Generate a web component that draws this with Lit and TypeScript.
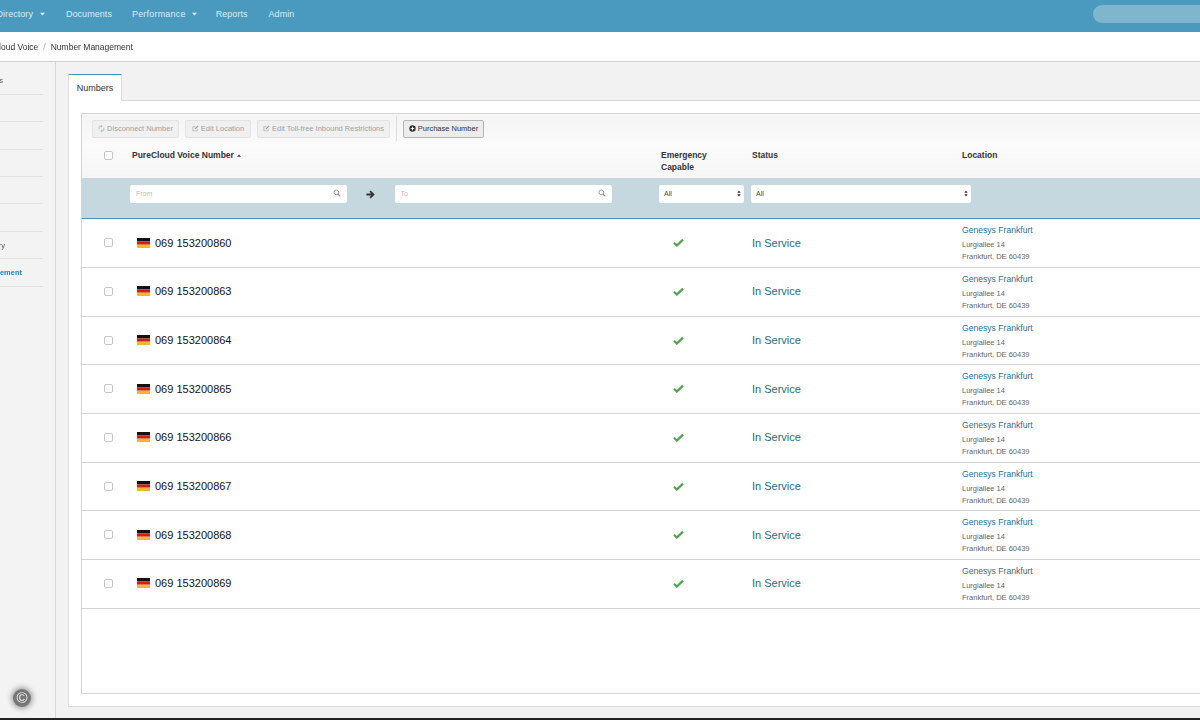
import { LitElement, html, css, svg } from "lit";
import { customElement } from "lit/decorators.js";

const NUMBERS = ["860", "863", "864", "865", "866", "867", "868", "869"];

const caret = html`<svg class="caret" viewBox="0 0 6 4"><path d="M0 .5h6L3 3.8z" fill="currentColor"/></svg>`;
const search = html`<svg class="search" viewBox="0 0 12 12"><circle cx="5" cy="5" r="3.5" fill="none" stroke="currentColor" stroke-width="1.3"/><path d="M7.6 7.6l3.4 3.4" stroke="currentColor" stroke-width="1.6"/></svg>`;
const updown = html`<svg class="updown" viewBox="0 0 6 10"><path d="M3 .5L5.5 4h-5zM3 9.5L.5 6h5z" fill="currentColor"/></svg>`;
const edit = html`<svg class="bi" viewBox="0 0 12 12"><path d="M9 7v3H1.500V3H6" fill="none" stroke="currentColor" stroke-width="1"/><path d="M4.500 7.500l.5-2L9.500 1l1.500 1.500L6.500 7z" fill="currentColor"/></svg>`;
const unlink = html`<svg class="bi" viewBox="0 0 12 12"><path d="M2 7V3.500A1.500 1.500 0 0 1 3.500 2H7M5 4.500L7 2 5 0M10 5v3.500A1.500 1.500 0 0 1 8.500 10H5M7 7.500L5 10l2 2" fill="none" stroke="currentColor" stroke-width="1"/></svg>`;
const plus = html`<svg class="bi" viewBox="0 0 12 12"><circle cx="6" cy="6" r="5.500" fill="#333"/><path d="M6 3v6M3 6h6" stroke="#fff" stroke-width="1.600"/></svg>`;
const flag = svg`<svg class="flag" viewBox="0 0 13 10"><rect width="13" height="3.400" fill="#111"/><rect y="3.400" width="13" height="3.300" fill="#c8201c"/><rect y="6.700" width="13" height="3.300" fill="#f2b632"/></svg>`;
const check = svg`<svg class="check" viewBox="0 0 12 10"><path d="M1 5.200l3.200 3.200L11 1.800" fill="none" stroke="#4ea54e" stroke-width="2.400"/></svg>`;
const arrow = svg`<svg class="arrow" viewBox="0 0 10 10"><path d="M.5 5h7M4.500 1.300L8.300 5 4.500 8.700" fill="none" stroke="#333" stroke-width="2"/></svg>`;

const SIDE = [
  { label: "Sites", cls: "p40" },
  { label: "", cls: "p40" },
  { label: "", cls: "p40" },
  { label: "", cls: "p40" },
  { label: "", cls: "p40" },
  { label: "", cls: "p40" },
  { label: "Inventory", cls: "p38" },
  { label: "Number Management", cls: "p21 active" },
];

@customElement("app-root")
export class AppRoot extends LitElement {
  static styles = css`
    :host { display: block; width: 1200px; height: 720px; overflow: hidden; background: #fff;
      font-family: "Liberation Sans", Arial, sans-serif; color: #333; position: relative; }
    .page { display: flex; flex-direction: column; height: 718px; filter: blur(0.4px); }
    .nav { height: 32px; flex: none; box-sizing: border-box; padding-bottom: 5px; background: #4a9abf; display: flex; align-items: center;
      color: #d5eef7; font-size: 9px; letter-spacing: .05px; overflow: hidden; }
    .nav-items { display: flex; align-items: center; gap: 21px; margin-left: -3.500px; flex: 1; white-space: nowrap; }
    .nav-item { display: flex; align-items: center; gap: 6px; }
    .nav-item.first { gap: 7px; }
    .nav-item.docs { margin-right: -1px; }
    .nav-item.wide { letter-spacing: .2px; margin-right: -2px; }
    .caret { width: 5px; height: 4px; }
    .nav-search { width: 130px; height: 18px; margin-right: -23px; border-radius: 9px;
      background: #7fb6cd; flex: none; }
    .crumbs { height: 30px; box-sizing: border-box; flex: none; display: flex; align-items: center; gap: 4px; margin-left: -25px;
      font-size: 8.500px; color: #333; border-bottom: 1px solid #cfcfcf; white-space: nowrap; padding-top: 1px; }
    .crumbs .sep { color: #aaa; padding: 0 1px; }
    .body { flex: 1; display: flex; min-height: 0; }
    .side { width: 55px; flex: none; background: #f3f3f3; border-right: 1px solid #d8d8d8; overflow: hidden; }
    .side-list { display: flex; flex-direction: column; padding-top: 5.500px; width: 43px; }
    .side-item { height: 27.400px; box-sizing: border-box; border-bottom: 1px solid #e2e2e2; font-size: 7.500px; color: #555;
      display: flex; align-items: center; justify-content: flex-end; white-space: nowrap; overflow: hidden; flex: none; }
    .side-item span { flex: none; }
    .p40 { padding-right: 40px; } .p38 { padding-right: 38px; } .p21 { padding-right: 21px; }
    .side-item.active { color: #1a87b4; font-weight: bold; }
    .main { flex: 1; min-width: 0; background: #f2f2f2; padding: 12px 0 11px 12px; display: flex; flex-direction: column; overflow: hidden; }
    .tabs { height: 27px; flex: none; display: flex; border-bottom: 1px solid #d9d9d9; box-sizing: border-box; }
    .tab { width: 54px; height: 27px; background: #fff; border-top: 1px solid #3f93b8; border-left: 1px solid #dedede; border-right: 1px solid #dedede;
      box-sizing: border-box; font-size: 9px; display: flex; align-items: center; justify-content: center; color: #333; }
    .panel { flex: 1; min-height: 0; width: 1200px; background: #fff; border-left: 1px solid #e0e0e0; border-bottom: 1px solid #dcdcdc;
      padding: 12px 0 12px 12px; box-sizing: border-box; display: flex; }
    .grid { flex: 1; border: 1px solid #d5d5d5; display: flex; flex-direction: column; }
    .toolbar { height: 29px; flex: none; display: flex; align-items: center; padding-left: 10px; gap: 6px;
      background: linear-gradient(#f4f4f4, #fafafa); }
    .btn { height: 18px; box-sizing: border-box; display: flex; align-items: center; justify-content: center; gap: 2px; border: 1px solid #e3e3e3;
      background: #f0f0f0; color: #a0a0a0; font-size: 7.500px; border-radius: 2px; white-space: nowrap; }
    .btn.on { border-color: #b5b5b5; background: #ececec; color: #333; }
    .b1 { width: 87px; } .b2 { width: 66px; } .b3 { width: 133px; } .b4 { width: 81px; }
    .divider { width: 1px; align-self: stretch; background: #dcdcdc; margin: 2px 0; }
    .bi { width: 7px; height: 7px; flex: none; }
    .cols { display: grid; grid-template-columns: 50px 529px 91px 210px 1fr; }
    .head { height: 35px; flex: none; background: linear-gradient(#fbfbfb, #f6f6f6); font-size: 8.500px; font-weight: bold; color: #333; line-height: 11.500px; }
    .head > div { padding-top: 7px; }
    .head > div:first-child { padding-top: 8px; }
    .cb { display: block; width: 7px; height: 7px; border: 1px solid #c6c6c6; border-radius: 2px; background: #fff; margin-left: 22px; }
    .sort-caret { width: 4px; height: 3px; display: inline-block; vertical-align: middle; margin-left: 3px; }
    .filters { height: 41.300px; flex: none; background: #c5d8e0; border-bottom: 1.500px solid #4c94b8; display: flex; align-items: flex-start; padding-top: 7px; box-sizing: border-box; padding-left: 48px; }
    .field { height: 18px; box-sizing: border-box; background: #fff; border-radius: 2px; display: flex; align-items: center; padding: 0 6px 1.500px; font-size: 7px; color: #444; }
    .field input { border: 0; outline: 0; background: none; padding: 0; margin: 0; flex: 1; min-width: 0; font: inherit; color: inherit; }
    .field input::placeholder { color: #bbb; }
    .from { width: 217px; } .to { width: 217px; }
    .search { width: 8px; height: 8px; color: #888; flex: none; }
    .arrow { width: 9px; height: 9px; flex: none; margin: 5px 19.500px 0 19px; }
    .sel { justify-content: space-between; padding: 0 3px 1.500px 5px; }
    .s1 { width: 85px; margin-left: 47.500px; } .s2 { width: 220px; margin-left: 7px; }
    .updown { width: 4px; height: 7px; color: #333; }
    .row { height: 48.700px; box-sizing: border-box; flex: none; border-bottom: 1px solid #d4d4d4; align-items: center; padding-bottom: 1px; }
    .num { display: flex; align-items: center; gap: 5px; font-size: 11px; color: #111; padding-left: 5px; }
    .flag { width: 13px; height: 10px; flex: none; }
    .check { width: 11px; height: 9px; display: block; margin-left: 12px; }
    .status { font-size: 11px; color: #2b6a87; }
    .loc { font-size: 7.500px; line-height: 12px; color: #666; margin-top: 2px; }
    .loc a { display: block; color: #2b6f92; font-size: 8.600px; line-height: 13px; margin-bottom: 2px; text-decoration: none; }
    .badge { position: absolute; left: 13px; top: 689px; width: 18px; height: 18px; border-radius: 50%; background: #777;
      box-shadow: 0 0 5px 2px rgba(0,0,0,.3); color: #f2f2f2; font-size: 15px; line-height: 18px; text-align: center; filter: blur(.3px); }
    .foot { height: 2px; background: #222; }
  `;

  render() {
    return html`
      <div class="page">
        <div class="nav">
          <div class="nav-items">
            <div class="nav-item first">Directory ${caret}</div>
            <div class="nav-item docs">Documents</div>
            <div class="nav-item wide">Performance ${caret}</div>
            <div class="nav-item">Reports</div>
            <div class="nav-item">Admin</div>
          </div>
          <div class="nav-search"></div>
        </div>
        <div class="crumbs"><span>PureCloud Voice</span><span class="sep">/</span><span>Number Management</span></div>
        <div class="body">
          <div class="side">
            <div class="side-list">
              ${SIDE.map(s => html`<div class="side-item ${s.cls}"><span>${s.label}</span></div>`)}
            </div>
          </div>
          <div class="main">
            <div class="tabs"><div class="tab">Numbers</div></div>
            <div class="panel">
              <div class="grid">
                <div class="toolbar">
                  <div class="btn b1">${unlink}Disconnect Number</div>
                  <div class="btn b2">${edit}Edit Location</div>
                  <div class="btn b3">${edit}Edit Toll-free Inbound Restrictions</div>
                  <div class="divider"></div>
                  <div class="btn on b4">${plus}Purchase Number</div>
                </div>
                <div class="head cols">
                  <div><span class="cb"></span></div>
                  <div>PureCloud Voice Number<svg class="sort-caret" viewBox="0 0 6 4"><path d="M0 3.800h6L3 .5z" fill="#333"/></svg></div>
                  <div>Emergency<br />Capable</div>
                  <div>Status</div>
                  <div>Location</div>
                </div>
                <div class="filters">
                  <div class="field from"><input placeholder="From" />${search}</div>
                  ${arrow}
                  <div class="field to"><input placeholder="To" />${search}</div>
                  <div class="field sel s1"><span>All</span>${updown}</div>
                  <div class="field sel s2"><span>All</span>${updown}</div>
                </div>
                ${NUMBERS.map(n => html`
                  <div class="row cols">
                    <div><span class="cb"></span></div>
                    <div class="num">${flag}<span>069 153200${n}</span></div>
                    <div>${check}</div>
                    <div class="status">In Service</div>
                    <div class="loc"><a>Genesys Frankfurt</a>Lurgiallee 14<br />Frankfurt, DE 60439</div>
                  </div>`)}
              </div>
            </div>
          </div>
        </div>
      </div>
      <div class="foot"></div>
      <div class="badge">©</div>
    `;
  }
}
